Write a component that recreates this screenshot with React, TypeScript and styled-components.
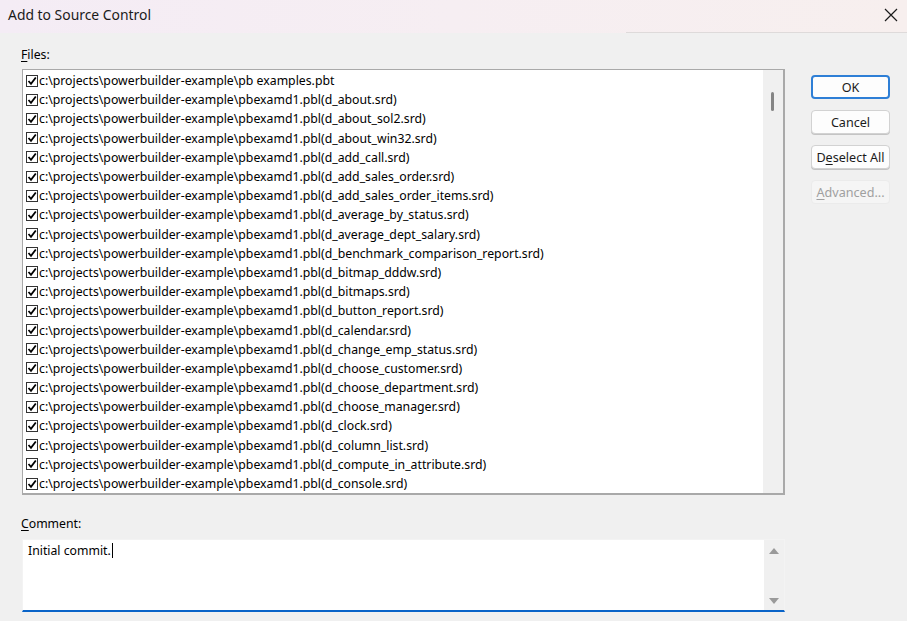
import React from "react";
import styled, { createGlobalStyle } from "styled-components";

const Global = createGlobalStyle`
  html, body { margin: 0; padding: 0; background: #f0f0f0; }
  body { font-family: "Noto Sans", "Segoe UI", sans-serif; color: #000; }
  * { box-sizing: border-box; }
`;

const Window = styled.div`
  width: 907px;
  height: 621px;
  background: #f0f0f0;
  overflow: hidden;
  display: flex;
  flex-direction: column;
`;

const TitleBar = styled.div`
  height: 33px;
  flex: none;
  display: flex;
  align-items: center;
  justify-content: space-between;
  padding: 0 0 0 8px;
  background: linear-gradient(90deg, #f4ecf5 0%, #f6eef2 50%, #f7efee 100%);
  position: relative;
`;

const TitleRule = styled.div`
  position: absolute;
  left: 626px;
  right: 0;
  bottom: 0;
  height: 1px;
  background: #dedada;
`;

const Title = styled.div`
  font-size: 13.9px;
  color: #1a1a1a;
  margin-top: -4px;
`;

const CloseBtn = styled.div`
  width: 32px;
  height: 33px;
  display: flex;
  align-items: center;
  justify-content: center;
  margin-top: -4px;
`;

const Body = styled.div`
  flex: 1;
  display: flex;
  padding-left: 22px;
`;

const LeftCol = styled.div`
  width: 763px;
  display: flex;
  flex-direction: column;
`;

const Label = styled.div<{ $top: number }>`
  font-size: 12.25px;
  line-height: 16px;
  height: 16px;
  margin-top: ${(p) => p.$top}px;
  margin-left: -1px;
  color: #000;
`;

const U = styled.span`
  text-decoration: underline;
  text-underline-offset: 2px;
`;

const ListBox = styled.div`
  margin-top: 6px;
  height: 426px;
  background: #fff;
  border: 1px solid #a9a9a9;
  border-bottom-width: 2px;
  border-right-width: 2px;
  display: flex;
`;

const Rows = styled.div`
  flex: 1;
  padding-top: 1px;
  overflow: hidden;
`;

const Row = styled.div`
  height: 19.2px;
  display: flex;
  align-items: center;
  padding-left: 3px;
  font-size: 12.27px;
  white-space: nowrap;
`;

const Check = styled.span`
  width: 12px;
  height: 12px;
  border: 1px solid #333;
  background: #fff;
  display: inline-flex;
  align-items: center;
  justify-content: center;
  margin-right: 1px;
  flex: none;
`;

const VScroll = styled.div`
  width: 20px;
  background: #f0f0f0;
  position: relative;
  flex: none;
`;

const Thumb = styled.div`
  position: absolute;
  left: 8px;
  top: 22px;
  width: 3px;
  height: 19px;
  border-radius: 2px;
  background: #858585;
`;

const CommentBox = styled.div`
  margin-top: 7px;
  height: 73px;
  background: #fff;
  border: 1px solid #f3f3f3;
  border-bottom: 2px solid #0a64c8;
  display: flex;
`;

const CommentText = styled.div`
  flex: 1;
  padding: 3px 0 0 5px;
  font-size: 12.25px;
  line-height: 16px;
`;

const Caret = styled.span`
  display: inline-block;
  width: 1px;
  height: 15px;
  background: #000;
  vertical-align: -3px;
  margin-left: 1px;
`;

const CommentScroll = styled.div`
  width: 20px;
  background: #f0f0f0;
  display: flex;
  flex-direction: column;
  justify-content: space-between;
  align-items: center;
  padding: 7px 0 5px;
  flex: none;
`;

const RightCol = styled.div`
  margin-left: 26px;
  padding-top: 42px;
  display: flex;
  flex-direction: column;
  gap: 11px;
`;

const Button = styled.div<{ $default?: boolean; $disabled?: boolean }>`
  width: 79px;
  height: 24px;
  border-radius: 4px;
  display: flex;
  align-items: center;
  justify-content: center;
  font-size: 12.6px;
  background: ${(p) => (p.$disabled ? "#f5f5f5" : "#fdfdfd")};
  color: ${(p) => (p.$disabled ? "#a0a0a0" : "#1b1b1b")};
  border: ${(p) =>
    p.$default ? "2px solid #2e7fd6" : p.$disabled ? "1px solid #ebebeb" : "1px solid #d2d2d2"};
  box-shadow: ${(p) => (p.$disabled || p.$default ? "none" : "0 1px 0 #c4c4c4")};
`;

const names = [
  "pb examples.pbt",
  "pbexamd1.pbl(d_about.srd)",
  "pbexamd1.pbl(d_about_sol2.srd)",
  "pbexamd1.pbl(d_about_win32.srd)",
  "pbexamd1.pbl(d_add_call.srd)",
  "pbexamd1.pbl(d_add_sales_order.srd)",
  "pbexamd1.pbl(d_add_sales_order_items.srd)",
  "pbexamd1.pbl(d_average_by_status.srd)",
  "pbexamd1.pbl(d_average_dept_salary.srd)",
  "pbexamd1.pbl(d_benchmark_comparison_report.srd)",
  "pbexamd1.pbl(d_bitmap_dddw.srd)",
  "pbexamd1.pbl(d_bitmaps.srd)",
  "pbexamd1.pbl(d_button_report.srd)",
  "pbexamd1.pbl(d_calendar.srd)",
  "pbexamd1.pbl(d_change_emp_status.srd)",
  "pbexamd1.pbl(d_choose_customer.srd)",
  "pbexamd1.pbl(d_choose_department.srd)",
  "pbexamd1.pbl(d_choose_manager.srd)",
  "pbexamd1.pbl(d_clock.srd)",
  "pbexamd1.pbl(d_column_list.srd)",
  "pbexamd1.pbl(d_compute_in_attribute.srd)",
  "pbexamd1.pbl(d_console.srd)",
];

const CheckMark = () => (
  <svg width="10" height="10" viewBox="0 0 10 10">
    <path d="M1.5 5 L4 7.8 L8.8 1.5" fill="none" stroke="#000" strokeWidth="1.8" />
  </svg>
);

export default function App() {
  return (
    <Window>
      <Global />
      <TitleBar>
        <Title>Add to Source Control</Title>
        <CloseBtn>
          <svg width="14" height="14" viewBox="0 0 14 14">
            <path d="M1 1 L13 13 M13 1 L1 13" stroke="#1a1a1a" strokeWidth="1.2" />
          </svg>
        </CloseBtn>
        <TitleRule />
      </TitleBar>
      <Body>
        <LeftCol>
          <Label $top={14}>
            <U>F</U>iles:
          </Label>
          <ListBox>
            <Rows>
              {names.map((n) => (
                <Row key={n}>
                  <Check>
                    <CheckMark />
                  </Check>
                  {"c:\\projects\\powerbuilder-example\\" + n}
                </Row>
              ))}
            </Rows>
            <VScroll>
              <Thumb />
            </VScroll>
          </ListBox>
          <Label $top={21}>
            <U>C</U>omment:
          </Label>
          <CommentBox>
            <CommentText>
              Initial commit.
              <Caret />
            </CommentText>
            <CommentScroll>
              <svg width="10" height="7" viewBox="0 0 10 7">
                <path d="M0 7 L5 1 L10 7 Z" fill="#9a9a9a" />
              </svg>
              <svg width="10" height="7" viewBox="0 0 10 7">
                <path d="M0 0 L5 6 L10 0 Z" fill="#9a9a9a" />
              </svg>
            </CommentScroll>
          </CommentBox>
        </LeftCol>
        <RightCol>
          <Button $default>OK</Button>
          <Button>Cancel</Button>
          <Button>
            D<U>e</U>select All
          </Button>
          <Button $disabled>
            <U>A</U>dvanced...
          </Button>
        </RightCol>
      </Body>
    </Window>
  );
}
